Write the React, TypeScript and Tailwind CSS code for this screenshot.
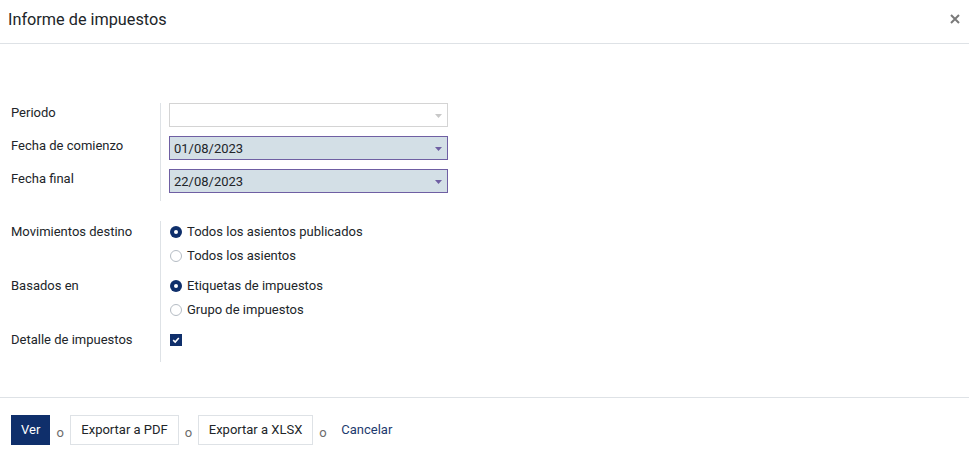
import React from "react";

const Caret = ({ color }: { color: string }) => (
  <svg width="7" height="4" viewBox="0 0 7 4" className="absolute right-[5px] top-[10px]">
    <path d="M0 0 L7 0 L3.5 4 Z" fill={color} />
  </svg>
);

function Radio({ checked, label }: { checked: boolean; label: string }) {
  return (
    <div className="flex h-[20px] items-center">
      {checked ? (
        <span className="flex h-[12px] w-[12px] items-center justify-center rounded-full bg-[#0f2f6b]">
          <span className="h-[4px] w-[4px] rounded-full bg-white" />
        </span>
      ) : (
        <span className="h-[12px] w-[12px] rounded-full border border-[#b5bcc4] bg-white" />
      )}
      <span className="ml-[5px] text-[13px] text-[#212529]">{label}</span>
    </div>
  );
}

export default function App() {
  return (
    <div
      className="flex h-[462px] w-[969px] flex-col bg-white text-[#212529]"
      style={{ fontFamily: "Roboto, 'Noto Sans', sans-serif" }}
    >
      {/* Header */}
      <div className="flex h-[44px] shrink-0 items-center justify-between border-b border-[#dee2e6] pl-[8px] pr-[9px]">
        <h4 className="pb-[3px] text-[16.25px] text-[#212529]">Informe de impuestos</h4>
        <svg width="10" height="10" viewBox="0 0 10 10" className="mb-[6px]">
          <path d="M1 1 L9 9 M9 1 L1 9" stroke="#7a7a7a" strokeWidth="2" />
        </svg>
      </div>

      {/* Body */}
      <div className="flex flex-1 flex-col pt-[59px]">
        {/* Group 1 */}
        <div className="grid grid-cols-[160px_1fr]">
          <div className="flex flex-col gap-[9px] pl-[11px] text-[13px]">
            <div className="h-[24px] pt-[1px] leading-[18px]">Periodo</div>
            <div className="h-[24px] pt-[1px] leading-[18px]">Fecha de comienzo</div>
            <div className="h-[24px] pt-[1px] leading-[18px]">Fecha final</div>
          </div>
          <div className="flex flex-col gap-[9px] border-l border-[#dee2e6] pb-[8px] pl-[8px]">
            <div className="relative h-[24px] w-[279px] border border-[#d4d4d4] bg-white">
              <Caret color="#c8c8c8" />
            </div>
            <div className="relative flex h-[24px] w-[279px] items-center border border-[#6f5fa3] bg-[#d3dfe6] pl-[4px] pt-[1px] text-[13px]">
              01/08/2023
              <Caret color="#6f5fa3" />
            </div>
            <div className="relative flex h-[24px] w-[279px] items-center border border-[#6f5fa3] bg-[#d3dfe6] pl-[4px] pt-[1px] text-[13px]">
              22/08/2023
              <Caret color="#6f5fa3" />
            </div>
          </div>
        </div>

        {/* Group 2 */}
        <div className="mt-[20px] grid grid-cols-[160px_1fr]">
          <div className="flex flex-col gap-[10px] pl-[11px] pt-[1px] text-[13px]">
            <div className="h-[44px] leading-[20px]">Movimientos destino</div>
            <div className="h-[44px] leading-[20px]">Basados en</div>
            <div className="h-[20px] leading-[20px]">Detalle de impuestos</div>
          </div>
          <div className="flex flex-col gap-[10px] border-l border-[#dee2e6] pb-[12px] pl-[9px] pt-[1px]">
            <div className="flex flex-col gap-[4px]">
              <Radio checked label="Todos los asientos publicados" />
              <Radio checked={false} label="Todos los asientos" />
            </div>
            <div className="flex flex-col gap-[4px]">
              <Radio checked label="Etiquetas de impuestos" />
              <Radio checked={false} label="Grupo de impuestos" />
            </div>
            <div className="flex h-[20px] items-center">
              <span className="flex h-[12px] w-[12px] items-center justify-center bg-[#0f2f6b]">
                <svg width="8" height="8" viewBox="0 0 8 8">
                  <path d="M1.2 4.2 L3.2 6 L6.8 2" stroke="white" strokeWidth="1.6" fill="none" />
                </svg>
              </span>
            </div>
          </div>
        </div>
      </div>

      {/* Footer */}
      <div className="flex h-[65px] shrink-0 items-center gap-[6px] border-t border-[#dee2e6] pb-[1px] pl-[11px] text-[13px]">
        <button className="h-[30px] bg-[#0f2f6b] px-[10px] text-white">Ver</button>
        <span className="mt-[6px] w-[8px] text-center text-[#6c6c6c]">o</span>
        <button className="h-[30px] border border-[#dee2e6] bg-white px-[10px] text-[#212529]">Exportar a PDF</button>
        <span className="mt-[6px] w-[7px] text-center text-[#6c6c6c]">o</span>
        <button className="h-[30px] border border-[#dee2e6] bg-white px-[10px] text-[#212529]">Exportar a XLSX</button>
        <span className="mt-[6px] w-[7px] text-center text-[#6c6c6c]">o</span>
        <button className="ml-[9px] h-[30px] text-[#1d3a6e]">Cancelar</button>
      </div>
    </div>
  );
}
